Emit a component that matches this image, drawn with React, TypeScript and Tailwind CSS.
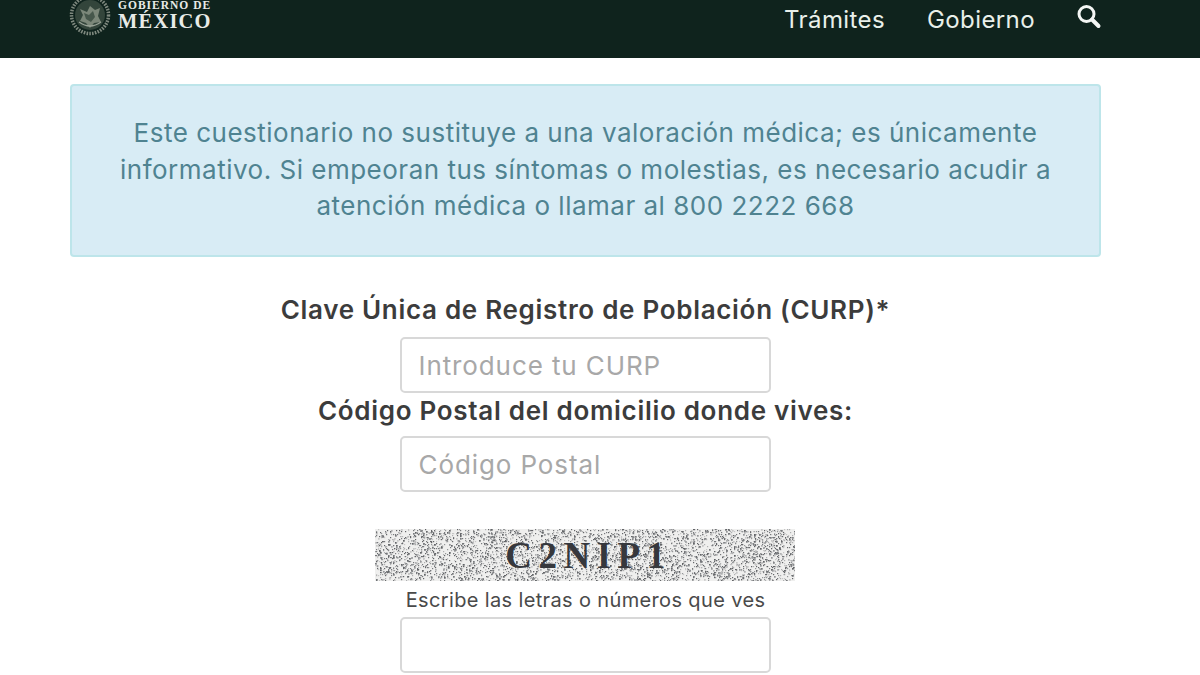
import { useMemo } from "react";

const FONT = "font-['Inter','Noto_Sans',sans-serif]";

// noise for the captcha background, seeded so every render gives the same picture
function useSpeckles(count: number, w: number, h: number) {
  return useMemo(() => {
    let seed = 1234;
    const rnd = () => {
      seed = (seed * 16807) % 2147483647;
      return seed / 2147483647;
    };
    return Array.from({ length: count }).map(() => ({
      x: Math.floor(rnd() * w),
      y: Math.floor(rnd() * h),
      s: rnd() > 0.8 ? 1.7 : 1.2,
      c: ["#77797c", "#939597", "#aeafb1", "#c6c6c6", "#636568"][Math.floor(rnd() * 5)],
    }));
  }, [count, w, h]);
}

function Seal() {
  return (
    <svg width="42" height="42" viewBox="0 0 42 42" className="shrink-0 -mt-[6px]">
      <circle cx="21" cy="21" r="18.5" fill="none" stroke="#7f897f" strokeWidth="3.5" strokeDasharray="1.6 1.2" />
      <circle cx="21" cy="21" r="15" fill="#33453b" />
      <path d="M11 15l7 3 3-6 5 4 5-2-2 8 3 6-7 1-4 5-4-5-6-2 3-6z" fill="#7b8779" />
      <path d="M15 19l5 2 4-4 2 6-4 5-5-3z" fill="#46574b" />
      <path d="M10 28q11 8 22 0" fill="none" stroke="#98a296" strokeWidth="1.5" />
    </svg>
  );
}

function SearchGlyph() {
  return (
    <svg width="26" height="26" viewBox="0 0 26 26" className="-mt-[5px] shrink-0" fill="none" stroke="#f4f6f4" strokeLinecap="round">
      <circle cx="10.5" cy="10" r="7.5" strokeWidth="3" />
      <path d="M16 15.5l6.5 6.5" strokeWidth="4" />
    </svg>
  );
}

function Captcha() {
  const dots = useSpeckles(4800, 420, 52);
  return (
    <div className="relative w-[420px] h-[52px] -ml-[2px] bg-[#efefee] flex items-center justify-center overflow-hidden">
      <svg width="420" height="52" viewBox="0 0 420 52" className="absolute inset-0">
        {dots.map((d, i) => (
          <rect key={i} x={d.x} y={d.y} width={d.s} height={d.s} fill={d.c} />
        ))}
      </svg>
      <span className="relative font-['Liberation_Serif',serif] font-bold text-[37px] leading-none tracking-[6.5px] text-[#36383d] ml-[8px]">
        C2NIP1
      </span>
    </div>
  );
}

export default function App() {
  return (
    <div className={`${FONT} w-[1200px] h-[675px] overflow-hidden bg-white`}>
      {/* Header */}
      <header className="h-[58px] bg-[#0f231d] overflow-hidden flex items-start justify-between pl-[69px] pr-[98px]">
        <div className="flex items-start gap-[7px]">
          <Seal />
          <div className="font-['Liberation_Serif',serif] font-bold text-[#e8ebe7]">
            <div className="text-[11.5px] leading-[11px] tracking-[1px]">GOBIERNO DE</div>
            <div className="text-[20.5px] leading-[21px] tracking-[1.2px]">MÉXICO</div>
          </div>
        </div>
        <nav className="flex items-center h-[39px] text-[#e9f0ea] text-[24px] tracking-[0.4px]">
          <a className="mr-[42px]">Trámites</a>
          <a className="mr-[41px]">Gobierno</a>
          <SearchGlyph />
        </nav>
      </header>

      <main className="w-[1031px] ml-[70px] flex flex-col items-center">
        {/* Alert */}
        <div className="w-full h-[173px] mt-[26px] bg-[#d8ecf5] border-2 border-[#bde5ea] rounded-[4px] flex items-center justify-center text-center text-[#4f8391] text-[26px] leading-[36.5px] tracking-[0.5px]">
          <p className="-mt-[1px]">
            Este cuestionario no sustituye a una valoración médica; es únicamente
            <br />
            informativo. Si empeoran tus síntomas o molestias, es necesario acudir a
            <br />
            atención médica o llamar al 800 2222 668
          </p>
        </div>

        {/* Form */}
        <label className="mt-[37px] h-[32px] leading-[32px] text-[26px] font-semibold text-[#3c3c3c] tracking-[0.7px] whitespace-nowrap">
          Clave Única de Registro de Población (CURP)*
        </label>
        <input
          placeholder="Introduce tu CURP"
          className="mt-[11px] -ml-[1px] w-[371px] h-[56px] shrink-0 bg-white border-2 border-[#d8d8d8] rounded-[5px] px-[17px] text-[26px] tracking-[0.9px] placeholder:text-[#a8a8a8] outline-none"
        />
        <label className="h-[34px] leading-[35px] text-[26px] font-semibold text-[#3c3c3c] tracking-[0.7px] whitespace-nowrap">
          Código Postal del domicilio donde vives:
        </label>
        <input
          placeholder="Código Postal"
          className="mt-[9px] -ml-[1px] w-[371px] h-[56px] shrink-0 bg-white border-2 border-[#d8d8d8] rounded-[5px] px-[17px] text-[26px] tracking-[0.9px] placeholder:text-[#a8a8a8] outline-none"
        />

        <div className="mt-[37px]">
          <Captcha />
        </div>
        <p className="mt-[7px] h-[24px] leading-[24px] text-[20px] tracking-[0.36px] text-[#4a4a4a] whitespace-nowrap">
          Escribe las letras o números que ves
        </p>
        <input className="mt-[5px] -ml-[1px] w-[371px] h-[56px] shrink-0 bg-white border-2 border-[#d8d8d8] rounded-[5px] px-[17px] text-[24px] outline-none" />
      </main>
    </div>
  );
}
